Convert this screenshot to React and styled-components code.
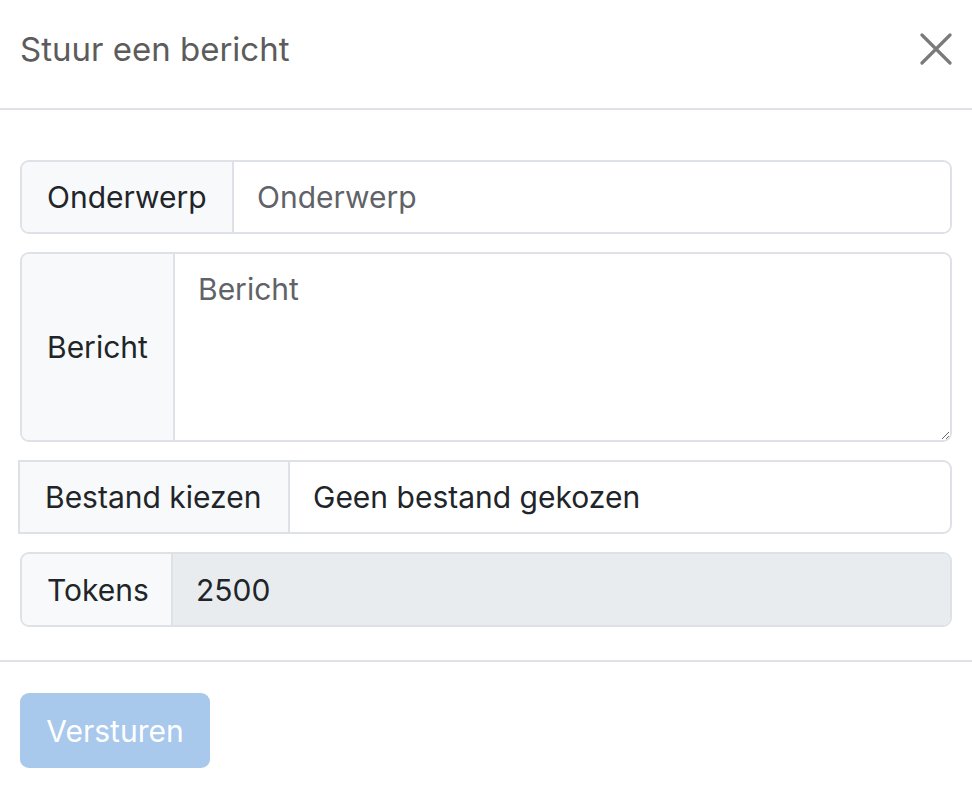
import React from "react"
import styled, { createGlobalStyle } from "styled-components"

const GlobalStyle = createGlobalStyle`
  html, body {
    margin: 0;
    padding: 0;
    background: #ffffff;
  }
  body {
    font-family: "Inter", "Noto Sans", sans-serif;
    color: #212529;
  }
  * {
    box-sizing: border-box;
  }
`

const Modal = styled.div`
  width: 972px;
  height: 788px;
  background: #ffffff;
  display: flex;
  flex-direction: column;
`

const Header = styled.div`
  height: 110px;
  padding: 0 20px 10px;
  display: flex;
  align-items: center;
  justify-content: space-between;
  border-bottom: 2px solid #dee2e6;
`

const Title = styled.h5`
  margin: 0;
  font-size: 33px;
  font-weight: 400;
  color: #5c5c5c;
`

const CloseButton = styled.button`
  width: 32px;
  height: 32px;
  padding: 0;
  border: 0;
  background: transparent;
  color: #7a7a7a;
  display: flex;
  align-items: center;
  justify-content: center;
  cursor: pointer;
`

const Body = styled.form`
  padding: 50px 20px 33px;
  display: flex;
  flex-direction: column;
  gap: 18px;
  border-bottom: 2px solid #dee2e6;
`

const Group = styled.div`
  display: flex;
  height: ${(p) => p.$height}px;
  border: 2px solid #dee2e6;
  border-radius: ${(p) => (p.$squareLeft ? "0 9px 9px 0" : "9px")};
  margin-left: ${(p) => (p.$squareLeft ? "-2px" : "0")};
  overflow: hidden;
`

const Addon = styled.label`
  flex: 0 0 ${(p) => p.$width}px;
  background: #f8f9fa;
  border-right: 2px solid #dee2e6;
  padding: 0 0 0 25px;
  display: flex;
  align-items: center;
  font-size: 30px;
  color: #212529;
  white-space: nowrap;
`

const fieldStyle = `
  flex: 1;
  min-width: 0;
  border: 0;
  outline: none;
  font-family: "Inter", "Noto Sans", sans-serif;
  font-size: 30px;
  color: #212529;
  padding: 0 23px;
  background: #ffffff;
  &::placeholder {
    color: #5f6368;
  }
`

const TextInput = styled.input`
  ${fieldStyle}
  background: ${(p) => (p.disabled ? "#e9ecef" : "#ffffff")};
  -webkit-text-fill-color: #212529;
  &::placeholder {
    -webkit-text-fill-color: #5f6368;
  }
`

const TextArea = styled.textarea`
  ${fieldStyle}
  padding: 14px 23px;
  line-height: 42px;
  resize: vertical;
`

const FileName = styled.div`
  flex: 1;
  display: flex;
  align-items: center;
  padding: 0 23px;
  font-size: 30px;
  color: #212529;
`

const Footer = styled.div`
  padding: 31px 20px 0;
`

const SubmitButton = styled.button`
  width: 190px;
  height: 75px;
  border: 0;
  border-radius: 9px;
  background: #a8c8ec;
  color: #ffffff;
  font-family: "Inter", "Noto Sans", sans-serif;
  font-size: 30px;
  cursor: default;
`

const CloseIcon = () => (
  <svg width="32" height="32" viewBox="0 0 32 32" fill="none">
    <path
      d="M2 2L30 30M30 2L2 30"
      stroke="currentColor"
      strokeWidth="3.2"
      strokeLinecap="round"
    />
  </svg>
)

const App = () => (
  <>
    <GlobalStyle />
    <Modal>
      <Header>
        <Title>Stuur een bericht</Title>
        <CloseButton aria-label="Sluiten">
          <CloseIcon />
        </CloseButton>
      </Header>
      <Body>
        <Group $height={74}>
          <Addon $width={212}>Onderwerp</Addon>
          <TextInput placeholder="Onderwerp" />
        </Group>
        <Group $height={190}>
          <Addon $width={153}>Bericht</Addon>
          <TextArea placeholder="Bericht" />
        </Group>
        <Group $height={74} $squareLeft>
          <Addon $width={270}>Bestand kiezen</Addon>
          <FileName>Geen bestand gekozen</FileName>
        </Group>
        <Group $height={75}>
          <Addon $width={151}>Tokens</Addon>
          <TextInput value="2500" disabled readOnly />
        </Group>
      </Body>
      <Footer>
        <SubmitButton type="button" disabled>
          Versturen
        </SubmitButton>
      </Footer>
    </Modal>
  </>
)

export default App
